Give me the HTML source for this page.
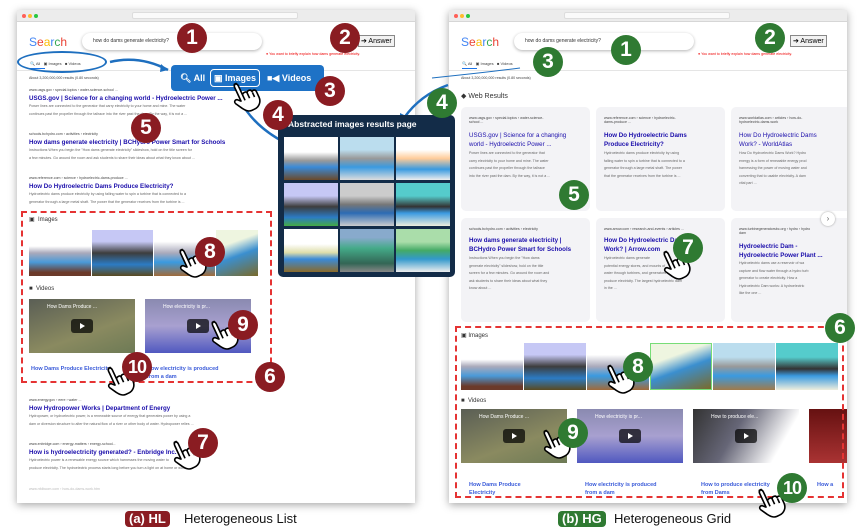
<!DOCTYPE html>
<html><head><meta charset="utf-8"><style>
*{margin:0;padding:0;box-sizing:border-box}
body{width:864px;height:529px;background:#fff;position:relative;overflow:hidden;font-family:"Liberation Sans",sans-serif}
.a{position:absolute}
.win{position:absolute;background:#fff;box-shadow:0 2px 8px rgba(0,0,0,.35);overflow:hidden}
.bar{position:absolute;left:0;top:0;right:0;height:12px;background:#ececec;border-bottom:1px solid #d6d6d6}
.dot{position:absolute;top:4px;width:4px;height:4px;border-radius:50%}
.logo{position:absolute;font-size:12px}
.sbox{position:absolute;height:17px;border-radius:9px;box-shadow:0 1px 3px rgba(0,0,0,.3);background:#fff;font-size:5px;color:#333;padding:5px 0 0 11px}
.ans{position:absolute;font-size:7px;border:1px solid #888;background:#f2f2f2;padding:1px 2px;color:#000}
.red{position:absolute;font-size:3.6px;color:#e00;white-space:nowrap}
.t{position:absolute;white-space:nowrap}
.url{font-size:3.6px;color:#444}
.tt{font-size:6.2px;color:#1a0dab;font-weight:bold}
.sn{font-size:3.6px;color:#666;line-height:7.5px}
.b{position:absolute;width:30px;height:30px;border-radius:50%;color:#fff;font-weight:bold;font-size:21px;text-align:center;line-height:30px}
.r{background:#8a1c22}.g{background:#2f7a32}
.dash{position:absolute;border:2px dashed #e53333}
.img{position:absolute;overflow:hidden}
.vid{position:absolute;background:linear-gradient(160deg,#5a5e55,#8a8a60 60%,#6d7a55)}
.play{position:absolute;left:50%;top:50%;width:22px;height:14px;margin:-7px 0 0 -11px;background:rgba(0,0,0,.7);border-radius:3px}
.play:after{content:"";position:absolute;left:9px;top:4px;border-left:5px solid #fff;border-top:3px solid transparent;border-bottom:3px solid transparent}
.vt{position:absolute;font-size:5.5px;color:#3a5bd9;font-weight:bold;line-height:7.5px}
.card{position:absolute;background:#f3f3f6;border-radius:5px}
.hand{position:absolute;width:30px;height:34px;transform:rotate(-25deg)}
.cap{position:absolute;top:511px;font-size:13px;color:#111}
.capb{position:absolute;top:511px;height:16px;border-radius:4px;color:#fff;font-size:13px;font-weight:bold;padding:0 4px;line-height:16px}
</style></head><body>

<svg width="0" height="0" style="position:absolute"><defs>
<symbol id="h" viewBox="0 0 30 34"><path d="M8 2c2 0 3 1 3 3v10c1-2 5-2 5 0 1-2 5-2 5 1 1-1 4-1 4 2v6c0 5-4 9-9 9h-3c-4 0-6-3-8-6l-4-7c-1-2 1-4 3-3l3 3V5c0-2 1-3 3-3z M11 15v6 M16 15v6 M21 17v5" fill="#fff" stroke="#000" stroke-width="1.6" stroke-linejoin="round"/></symbol>
</defs></svg>

<!-- LEFT WINDOW -->
<div class="win" style="left:17px;top:10px;width:398px;height:493px">
<div class="bar"><div class="dot" style="left:5px;background:#ff5f57"></div><div class="dot" style="left:11px;background:#febc2e"></div><div class="dot" style="left:17px;background:#28c840"></div>
<div class="a" style="left:115px;top:2px;width:166px;height:7px;background:#fafafa;border:1px solid #ddd;border-radius:2px"></div></div>
<div class="logo" style="left:12px;top:25px"><span style="color:#4285f4">S</span><span style="color:#ea4335">e</span><span style="color:#fbbc05">a</span><span style="color:#4285f4">r</span><span style="color:#34a853">c</span><span style="color:#ea4335">h</span></div>
<div class="sbox" style="left:65px;top:23px;width:180px">how do dams generate electricity?</div>
<div class="ans" style="left:341px;top:25px">➔ Answer</div>
<div class="red" style="left:249px;top:42px">● You want to briefly explain how dams generate electricity.</div>
<div class="t url" style="left:13px;top:51px;font-size:4px">🔍 All &nbsp; ▣ Images &nbsp; ■ Videos</div>
<div class="a" style="left:13px;top:58px;width:15px;height:1px;background:#1a73e8"></div>
<div class="a" style="left:0;top:60px;width:398px;height:1px;background:#e5e5e5"></div>
<div class="t url" style="left:12px;top:66px">About 3,200,000,000 results (0.80 seconds)</div>
<div class="t url" style="left:12px;top:78px">www.usgs.gov › special-topics › water-science-school ...</div>
<div class="t tt" style="left:12px;top:85px">USGS.gov | Science for a changing world - Hydroelectric Power ...</div>
<div class="t sn" style="left:12px;top:93px">Power lines are connected to the generator that carry electricity to your home and mine. The water<br>continues past the propeller through the tailrace into the river past the dam. By the way, it is not a ...</div>
<div class="t url" style="left:12px;top:122px">schools.bchydro.com › activities › electricity</div>
<div class="t tt" style="left:12px;top:129px">How dams generate electricity | BCHydro Power Smart for Schools</div>
<div class="t sn" style="left:12px;top:137px">Instructions When you begin the "How dams generate electricity" slideshow, hold on the title screen for<br>a few minutes. Go around the room and ask students to share their ideas about what they know about ...</div>
<div class="t url" style="left:12px;top:166px">www.reference.com › science › hydroelectric-dams-produce ...</div>
<div class="t tt" style="left:12px;top:173px">How Do Hydroelectric Dams Produce Electricity?</div>
<div class="t sn" style="left:12px;top:181px">Hydroelectric dams produce electricity by using falling water to spin a turbine that is connected to a<br>generator through a large metal shaft. The power that the generator receives from the turbine is ...</div>
<div class="t" style="left:12px;top:206px;font-size:6px;color:#333">▣ &nbsp;Images</div>
<div class="img" style="left:12px;top:220px;width:62px;height:46px;background:linear-gradient(#fff 35%,#aab 50%,#4a9ad8 70%,#6b3a2a 92%)"></div>
<div class="img" style="left:75px;top:220px;width:61px;height:46px;background:linear-gradient(#c6c8f5 25%,#3d3d3d 50%,#2c7bc4 75%,#5a4a20)"></div>
<div class="img" style="left:137px;top:220px;width:61px;height:46px;background:linear-gradient(#fff 25%,#aab 50%,#3a9ae0 70%,#a06a3a)"></div>
<div class="img" style="left:199px;top:220px;width:42px;height:46px;background:linear-gradient(160deg,#eef5e0 30%,#3b8fcf 55%,#7a6a2a)"></div>
<div class="t" style="left:12px;top:276px;font-size:6px;color:#333">■ &nbsp;Videos</div>
<div class="vid" style="left:12px;top:289px;width:106px;height:54px"><div class="t" style="left:18px;top:5px;font-size:5px;color:#fff">How Dams Produce ...</div><div class="play"></div></div>
<div class="vid" style="left:128px;top:289px;width:106px;height:54px;background:linear-gradient(#8a8ab0,#a8a0d0 50%,#5058c0)"><div class="t" style="left:18px;top:5px;font-size:5px;color:#fff">How electricity is pr...</div><div class="play"></div></div>
<div class="vt" style="left:14px;top:103px;top:356px">How Dams Produce Electricity</div>
<div class="vt" style="left:130px;top:356px">How electricity is produced<br>from a dam</div>
<div class="t url" style="left:12px;top:388px">www.energy.gov › eere › water ...</div>
<div class="t tt" style="left:12px;top:395px">How Hydropower Works | Department of Energy</div>
<div class="t sn" style="left:12px;top:403px">Hydropower, or hydroelectric power, is a renewable source of energy that generates power by using a<br>dam or diversion structure to alter the natural flow of a river or other body of water. Hydropower relies ...</div>
<div class="t url" style="left:12px;top:432px">www.enbridge.com › energy-matters › energy-school...</div>
<div class="t tt" style="left:12px;top:439px">How is hydroelectricity generated? - Enbridge Inc.</div>
<div class="t sn" style="left:12px;top:447px">Hydroelectric power is a renewable energy source which harnesses the moving water to<br>produce electricity. The hydroelectric process starts long before you turn a light on at home or work.</div>
<div class="t url" style="left:12px;top:477px;color:#bbb">www.nfdbcom.com › how-do-dams-work.htm</div>
</div>

<!-- RIGHT WINDOW -->
<div class="win" style="left:449px;top:10px;width:398px;height:493px">
<div class="bar"><div class="dot" style="left:5px;background:#ff5f57"></div><div class="dot" style="left:11px;background:#febc2e"></div><div class="dot" style="left:17px;background:#28c840"></div>
<div class="a" style="left:115px;top:2px;width:166px;height:7px;background:#fafafa;border:1px solid #ddd;border-radius:2px"></div></div>
<div class="logo" style="left:12px;top:25px"><span style="color:#4285f4">S</span><span style="color:#ea4335">e</span><span style="color:#fbbc05">a</span><span style="color:#4285f4">r</span><span style="color:#34a853">c</span><span style="color:#ea4335">h</span></div>
<div class="sbox" style="left:65px;top:23px;width:180px">how do dams generate electricity?</div>
<div class="ans" style="left:341px;top:25px">➔ Answer</div>
<div class="red" style="left:249px;top:42px">● You want to briefly explain how dams generate electricity.</div>
<div class="t url" style="left:13px;top:51px;font-size:4px">🔍 All &nbsp; ▣ Images &nbsp; ■ Videos</div>
<div class="a" style="left:13px;top:58px;width:15px;height:1px;background:#1a73e8"></div>
<div class="a" style="left:0;top:60px;width:398px;height:1px;background:#e5e5e5"></div>
<div class="t url" style="left:12px;top:66px">About 3,200,000,000 results (0.80 seconds)</div>
<div class="t" style="left:12px;top:82px;font-size:7px;color:#333">◆ Web Results</div>
<div class="card" style="left:12px;top:97px;width:129px;height:104px"></div>
<div class="card" style="left:147px;top:97px;width:129px;height:104px"></div>
<div class="card" style="left:282px;top:97px;width:129px;height:104px"></div>
<div class="card" style="left:12px;top:208px;width:129px;height:104px"></div>
<div class="card" style="left:147px;top:208px;width:129px;height:104px"></div>
<div class="card" style="left:282px;top:208px;width:129px;height:104px"></div>
<div class="t url" style="left:20px;top:106px">www.usgs.gov › special-topics › water-science-<br>school ...</div>
<div class="t tt" style="left:20px;top:121px;font-weight:normal;line-height:9px">USGS.gov | Science for a changing<br>world - Hydroelectric Power ...</div>
<div class="t sn" style="left:20px;top:140px">Power lines are connected to the generator that<br>carry electricity to your home and mine. The water<br>continues past the propeller through the tailrace<br>into the river past the dam. By the way, it is not a ...</div>
<div class="t url" style="left:155px;top:106px">www.reference.com › science › hydroelectric-<br>dams-produce ...</div>
<div class="t tt" style="left:155px;top:121px;line-height:9px">How Do Hydroelectric Dams<br>Produce Electricity?</div>
<div class="t sn" style="left:155px;top:140px">Hydroelectric dams produce electricity by using<br>falling water to spin a turbine that is connected to a<br>generator through a large metal shaft. The power<br>that the generator receives from the turbine is ...</div>
<div class="t url" style="left:290px;top:106px">www.worldatlas.com › articles › how-do-<br>hydroelectric-dams-work</div>
<div class="t tt" style="left:290px;top:121px;font-weight:normal;line-height:9px">How Do Hydroelectric Dams<br>Work? - WorldAtlas</div>
<div class="t sn" style="left:290px;top:140px">How Do Hydroelectric Dams Work? Hydro<br>energy is a form of renewable energy prod<br>harnessing the power of moving water and<br>converting that to usable electricity. A dam<br>vital part ...</div>
<div class="t url" style="left:20px;top:217px">schools.bchydro.com › activities › electricity</div>
<div class="t tt" style="left:20px;top:226px;line-height:9px">How dams generate electricity |<br>BCHydro Power Smart for Schools</div>
<div class="t sn" style="left:20px;top:245px">Instructions When you begin the "How dams<br>generate electricity" slideshow, hold on the title<br>screen for a few minutes. Go around the room and<br>ask students to share their ideas about what they<br>know about ...</div>
<div class="t url" style="left:155px;top:217px">www.arrow.com › research-and-events › articles ...</div>
<div class="t tt" style="left:155px;top:226px;line-height:9px">How Do Hydroelectric Dams<br>Work? | Arrow.com</div>
<div class="t sn" style="left:155px;top:245px">Hydroelectric dams generate<br>potential energy stores, and mounts of<br>water through turbines, and generators that<br>produce electricity. The largest hydroelectric dam<br>in the ...</div>
<div class="t url" style="left:290px;top:217px">www.turbinegeneratorsbc.org › hydro › hydro<br>dam</div>
<div class="t tt" style="left:290px;top:232px;line-height:9px">Hydroelectric Dam -<br>Hydroelectric Power Plant ...</div>
<div class="t sn" style="left:290px;top:250px">Hydroelectric dams use a reservoir of wa<br>capture and flow water through a hydro turb<br>generator to create electricity. How a<br>Hydroelectric Dam works: A hydroelectric<br>like the one ...</div>
<div class="a" style="left:372px;top:202px;width:14px;height:14px;border-radius:50%;background:#fff;box-shadow:0 0 2px #999;font-size:8px;text-align:center;line-height:13px;color:#666">›</div>
<div class="t" style="left:12px;top:322px;font-size:6px;color:#333">▣ Images</div>
<div class="img" style="left:12px;top:333px;width:62px;height:47px;background:linear-gradient(#fff 35%,#aab 50%,#4a9ad8 70%,#6b3a2a 92%)"></div>
<div class="img" style="left:75px;top:333px;width:62px;height:47px;background:linear-gradient(#c6c8f5 25%,#3d3d3d 50%,#2c7bc4 75%,#5a4a20)"></div>
<div class="img" style="left:138px;top:333px;width:62px;height:47px;background:linear-gradient(#fff 25%,#aab 50%,#3a9ae0 70%,#a06a3a)"></div>
<div class="img" style="left:201px;top:333px;width:62px;height:47px;background:linear-gradient(160deg,#eef5e0 30%,#3b8fcf 55%,#7a6a2a);border:1px solid #7d7"></div>
<div class="img" style="left:264px;top:333px;width:62px;height:47px;background:linear-gradient(#bde 30%,#999 50%,#3a9ae0 70%,#a07a4a)"></div>
<div class="img" style="left:327px;top:333px;width:62px;height:47px;background:linear-gradient(#5cc 30%,#333 55%,#3a9ae0 70%,#eed)"></div>
<div class="t" style="left:12px;top:388px;font-size:6px;color:#333">■ &nbsp;Videos</div>
<div class="vid" style="left:12px;top:399px;width:106px;height:54px"><div class="t" style="left:18px;top:5px;font-size:5px;color:#fff">How Dams Produce ...</div><div class="play"></div></div>
<div class="vid" style="left:128px;top:399px;width:106px;height:54px;background:linear-gradient(#8a8ab0,#a8a0d0 50%,#5058c0)"><div class="t" style="left:18px;top:5px;font-size:5px;color:#fff">How electricity is pr...</div><div class="play"></div></div>
<div class="vid" style="left:244px;top:399px;width:106px;height:54px;background:linear-gradient(120deg,#333,#667 40%,#fff 80%)"><div class="t" style="left:18px;top:5px;font-size:5px;color:#fff">How to produce ele...</div><div class="play"></div></div>
<div class="vid" style="left:360px;top:399px;width:40px;height:54px;background:linear-gradient(#611,#a33)"></div>
<div class="vt" style="left:20px;top:472px">How Dams Produce<br>Electricity</div>
<div class="vt" style="left:136px;top:472px">How electricity is produced<br>from a dam</div>
<div class="vt" style="left:252px;top:472px">How to produce electricity<br>from Dams</div>
<div class="vt" style="left:368px;top:472px">How a</div>
</div>

<!-- blue oval & tab bar -->
<div class="a" style="left:17px;top:51px;width:90px;height:22px;border:2px solid #1e6fbf;border-radius:45px/11px"></div>
<svg class="a" style="left:0;top:0" width="864" height="529">
<path d="M110 62 Q140 55 168 70" stroke="#1e6fbf" stroke-width="2.5" fill="none"/>
<path d="M168 70 l-7 -6 l-1 8z" fill="#1e6fbf"/>
<path d="M240 100 Q255 130 296 148" stroke="#1e6fbf" stroke-width="2.5" fill="none"/>
<path d="M300 150 l-8 -7 l-2 9z" fill="#1e6fbf"/>
<path d="M448 85 Q420 95 404 118" stroke="#1e6fbf" stroke-width="2.5" fill="none"/>
<path d="M400 123 l0 -10 l8 4z" fill="#1e6fbf"/>
<path d="M432 78 Q490 72 520 68" stroke="#1e6fbf" stroke-width="1" fill="none"/>
</svg>
<div class="a" style="left:171px;top:65px;width:153px;height:26px;background:#1e72c6;border-radius:4px;color:#fff;font-weight:bold;font-size:9px;line-height:26px"><span style="position:absolute;left:9px">🔍︎ All</span><span style="position:absolute;left:39px;top:4px;height:18px;line-height:16px;border:1.5px solid #fff;border-radius:4px;padding:0 3px">▣ Images</span><span style="position:absolute;left:96px">■◀ Videos</span></div>

<!-- overlay panel -->
<div class="a" style="left:278px;top:115px;width:177px;height:162px;background:#132c48;border-radius:5px"></div>
<div class="t" style="left:288px;top:119px;font-size:8.5px;color:#fff;font-weight:bold">Abstracted images results page</div>
<div class="img" style="left:284px;top:137px;width:54px;height:43px;background:linear-gradient(#fff 35%,#999 55%,#3a8ad8 70%,#6b4a2a)"></div>
<div class="img" style="left:340px;top:137px;width:54px;height:43px;background:linear-gradient(#bde 30%,#999 50%,#3a9ae0 70%,#ddd)"></div>
<div class="img" style="left:396px;top:137px;width:54px;height:43px;background:linear-gradient(#fff 30%,#fc9 50%,#3a9ae0 75%,#eee)"></div>
<div class="img" style="left:284px;top:183px;width:54px;height:43px;background:linear-gradient(#c6c8f5 30%,#3d3d3d 55%,#2c7bc4 80%,#4a4)"></div>
<div class="img" style="left:340px;top:183px;width:54px;height:43px;background:linear-gradient(#ccc 30%,#777 50%,#2c6bb4 70%,#ccc)"></div>
<div class="img" style="left:396px;top:183px;width:54px;height:43px;background:linear-gradient(#5cc 30%,#333 55%,#3a9ae0 70%,#eed)"></div>
<div class="img" style="left:284px;top:229px;width:54px;height:43px;background:linear-gradient(#fff 35%,#dda 55%,#3a8ad8 70%,#8a6a2a)"></div>
<div class="img" style="left:340px;top:229px;width:54px;height:43px;background:linear-gradient(#8ac 20%,#4a8 45%,#365 80%,#888)"></div>
<div class="img" style="left:396px;top:229px;width:54px;height:43px;background:linear-gradient(#ada 30%,#4a6 50%,#39c 70%,#eee)"></div>

<!-- dashed boxes -->
<div class="dash" style="left:21px;top:211px;width:251px;height:172px"></div>
<div class="dash" style="left:455px;top:326px;width:389px;height:172px"></div>

<!-- hands -->
<svg class="hand" style="left:232px;top:78px"><use href="#h"/></svg>
<svg class="hand" style="left:178px;top:244px"><use href="#h"/></svg>
<svg class="hand" style="left:210px;top:316px"><use href="#h"/></svg>
<svg class="hand" style="left:106px;top:362px"><use href="#h"/></svg>
<svg class="hand" style="left:172px;top:436px"><use href="#h"/></svg>
<svg class="hand" style="left:662px;top:246px"><use href="#h"/></svg>
<svg class="hand" style="left:606px;top:360px"><use href="#h"/></svg>
<svg class="hand" style="left:542px;top:425px"><use href="#h"/></svg>
<svg class="hand" style="left:757px;top:484px"><use href="#h"/></svg>

<!-- badges -->
<div class="b r" style="left:177px;top:23px">1</div>
<div class="b r" style="left:330px;top:23px">2</div>
<div class="b r" style="left:315px;top:76px">3</div>
<div class="b r" style="left:263px;top:100px">4</div>
<div class="b r" style="left:131px;top:113px">5</div>
<div class="b r" style="left:255px;top:362px">6</div>
<div class="b r" style="left:188px;top:428px">7</div>
<div class="b r" style="left:195px;top:237px">8</div>
<div class="b r" style="left:228px;top:310px">9</div>
<div class="b r" style="left:122px;top:352px;font-size:18px;letter-spacing:-1px">10</div>
<div class="b g" style="left:611px;top:35px">1</div>
<div class="b g" style="left:755px;top:23px">2</div>
<div class="b g" style="left:533px;top:47px">3</div>
<div class="b g" style="left:427px;top:88px">4</div>
<div class="b g" style="left:559px;top:180px">5</div>
<div class="b g" style="left:825px;top:313px">6</div>
<div class="b g" style="left:673px;top:233px">7</div>
<div class="b g" style="left:623px;top:352px">8</div>
<div class="b g" style="left:558px;top:418px">9</div>
<div class="b g" style="left:777px;top:473px;font-size:18px;letter-spacing:-1px">10</div>

<!-- captions -->
<div class="capb" style="left:125px;background:#8a1c22">(a) HL</div>
<div class="cap" style="left:184px">Heterogeneous List</div>
<div class="capb" style="left:558px;background:#2f7a32">(b) HG</div>
<div class="cap" style="left:614px">Heterogeneous Grid</div>
</body></html>
